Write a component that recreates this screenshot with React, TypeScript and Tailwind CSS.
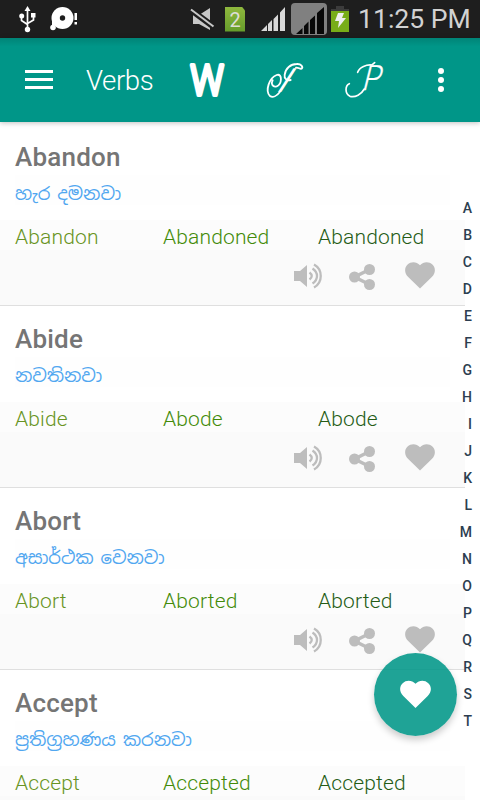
import type { ReactNode } from "react";

type Verb = {
  base: string;
  meaning: string;
  past: string;
  participle: string;
};

const verbs: Verb[] = [
  { base: "Abandon", meaning: "හැර දමනවා", past: "Abandoned", participle: "Abandoned" },
  { base: "Abide", meaning: "නවතිනවා", past: "Abode", participle: "Abode" },
  { base: "Abort", meaning: "අසාර්ථක වෙනවා", past: "Aborted", participle: "Aborted" },
  { base: "Accept", meaning: "ප්‍රතිග්‍රහණය කරනවා", past: "Accepted", participle: "Accepted" },
];

const letters = "ABCDEFGHIJKLMNOPQRST".split("");

const HEART = "M15 26.5 3.2 15C-1 10.5-.6 5.600 2.600 2.600 6-.8 11.500-.6 15 3.200 18.500-.6 24-.8 27.400 2.600 30.600 5.600 31 10.500 26.800 15Z";

function StatusBar() {
  return (
    <header className="flex h-[38px] shrink-0 items-center bg-[#1e1e1e] text-[#d2d2d2]">
      <svg className="ml-[18px] shrink-0" width="19" height="28" viewBox="0 0 19 28" fill="none" stroke="#fff" strokeWidth="1.7">
        <path d="M9.500 4v20M3.500 12v3.500l6 4M15.500 10v5l-6 3.500" />
        <path d="m9.500 1 3 5h-6z" fill="#fff" stroke="none" />
        <circle cx="3.700" cy="11" r="2.500" fill="#fff" stroke="none" />
        <path d="M13 8h4.500v4.500H13z" fill="#fff" stroke="none" />
        <circle cx="9.500" cy="24.500" r="2.700" fill="#fff" stroke="none" />
      </svg>
      <svg className="ml-[12px] shrink-0" width="29" height="26" viewBox="0 0 29 26" fill="#fff">
        <circle cx="13.500" cy="12" r="11" />
        <circle cx="13.500" cy="12" r="2.700" fill="#1e1e1e" />
        <path d="m3 12 3 7-3 3z" />
        <circle cx="4" cy="21.500" r="2.800" />
        <path d="M25.500 7H28v7h-2.500zM25.500 16H28v2.500h-2.500z" />
      </svg>
      <svg className="ml-[112px] shrink-0" width="26" height="26" viewBox="0 0 26 26">
        <path d="M3 9h6L20 2v22L9 18H3z" fill="#c8c8c8" />
        <path d="M1 4 24 21" stroke="#1e1e1e" strokeWidth="6" />
        <path d="M1 3.500 23.500 20.500" stroke="#c8c8c8" strokeWidth="2" />
      </svg>
      <div className="ml-[9px] flex h-[25px] w-5 shrink-0 items-center justify-center bg-gradient-to-b from-[#8fb83e] to-[#659c2b] pt-0.5 text-[20px] leading-none text-[#deded5] [clip-path:polygon(0_0,84%_0,100%_16%,100%_100%,0_100%)]">
        2
      </div>
      <svg className="ml-[16px] shrink-0" width="24" height="24" viewBox="0 0 24 24" fill="#d8d8d8">
        <path d="M0 24 6 18v6zM7 17l4-4v11H7zM12.500 12 17 7.500V24h-4.500zM19 5.500 24 0v24h-5z" />
      </svg>
      <div className="ml-1.5 flex h-8 w-9 shrink-0 items-center justify-center rounded-[4px] bg-[#808080]">
        <svg className="mt-0.5 ml-0.5" width="28" height="27" viewBox="0 0 28 27" fill="#080808">
          <path d="m0 27 6.500-6v6zM8 19l4.500-4.500V27H8zM14 13l5-4.500V27h-5zM21 6l7-6v27h-7z" />
        </svg>
      </div>
      <svg className="ml-1 shrink-0" width="18" height="26" viewBox="0 0 18 26">
        <path d="M5 0h8v3h5v3H0V3h5z" fill="#3c3c3c" />
        <path d="M0 5h18v21H0z" fill="#78ad18" />
        <path d="M7 7h6l-2 5h4L7 22l1-7H4z" fill="#eee" />
      </svg>
      <span className="ml-[9px] whitespace-nowrap text-[26.600px] leading-[38px]">11:25 PM</span>
    </header>
  );
}

function ToolbarButton({ label, children }: { label: string; children: ReactNode }) {
  return (
    <button aria-label={label} className="h-12 w-10 shrink-0 text-white">
      {children}
    </button>
  );
}

function Toolbar() {
  return (
    <nav className="relative z-10 flex h-[84px] shrink-0 items-center bg-[#009688] bg-gradient-to-b from-[#008477] to-[#009688] to-10% text-white shadow-[0_1px_5px_rgba(0,0,0,0.25)]">
      <button aria-label="Menu" className="mb-0.5 ml-[25px] flex w-7 shrink-0 flex-col gap-[5px]">
        <span className="h-[3px] bg-white" />
        <span className="h-[3px] bg-white" />
        <span className="h-[3px] bg-white" />
      </button>
      <h1 className="mt-0.5 ml-[33px] w-[100px] shrink-0 text-[27.600px] leading-none font-light tracking-[-0.4px]">Verbs</h1>
      <ToolbarButton label="Words">
        <svg className="overflow-visible" width="40" height="48" viewBox="0 0 40 48" fill="currentColor">
          <text x="4.200" y="39" fontSize="43" fontWeight="300" textLength="33.500" lengthAdjust="spacingAndGlyphs" stroke="currentColor" strokeWidth="4" strokeLinejoin="round">
            W
          </text>
        </svg>
      </ToolbarButton>
      <div className="ml-[38px] flex">
        <ToolbarButton label="Idioms">
          <svg className="overflow-visible" width="40" height="48" viewBox="12 3 120 144" fill="none" stroke="currentColor" strokeWidth="5.500" strokeLinecap="round">
            <text transform="translate(45 112) skewX(-33)" fontSize="100" fontWeight="400" fill="currentColor" stroke="none">
              I
            </text>
            <path d="M60 110C50 124 38 128 30 123 14 108 28 68 50 60 68 54 66 88 50 94 38 98 32 86 38 76" />
            <path d="M92 75C80 78 72 70 74 60 76 40 92 27 110 27 124 26 130 36 125 41 119 43 116 37 108 38" />
          </svg>
        </ToolbarButton>
      </div>
      <div className="ml-[38px] flex">
        <ToolbarButton label="Phrases">
          <svg className="overflow-visible" width="40" height="48" viewBox="6 3 120 144" fill="none" stroke="currentColor" strokeWidth="5" strokeLinecap="round">
            <text transform="translate(64 104) skewX(-14)" fontSize="105" fontWeight="300" textLength="54" lengthAdjust="spacingAndGlyphs" fill="currentColor" stroke="currentColor" strokeWidth="1">
              P
            </text>
            <path d="M73 102C64 118 46 128 30 124 14 116 15 92 28 86" />
            <path d="M53 52C58 36 80 28 96 30L104 23" />
          </svg>
        </ToolbarButton>
      </div>
      <button aria-label="More options" className="ml-[56px] flex shrink-0 flex-col gap-[3px]">
        <span className="size-1.5 rounded-full bg-white" />
        <span className="size-1.5 rounded-full bg-white" />
        <span className="size-1.5 rounded-full bg-white" />
      </button>
    </nav>
  );
}

function VerbRow({ verb }: { verb: Verb }) {
  return (
    <li className="flex h-[182px] w-[465px] shrink-0 flex-col border-b border-[#dfdfdf]">
      <h2 className="mt-[15px] h-9 pl-[15px] text-[26px] leading-9 font-medium tracking-[0.2px] text-[#757575]">{verb.base}</h2>
      <p className="ml-[15px] h-[30px] w-[435px] bg-[#fefefe] font-['Noto_Sans_Sinhala','Noto_Sans',sans-serif] text-[18px] leading-[38px] [word-spacing:-2px] text-[#51a7f0]">
        {verb.meaning}
      </p>
      <div className="mt-[15px] flex h-[30px] bg-[#fcfcfc] pl-[15px] text-[21px] leading-[34px] font-light tracking-[0.150px]">
        <span className="w-[148px] text-[#689423]">{verb.base}</span>
        <span className="w-[155px] text-[#438b09]">{verb.past}</span>
        <span className="text-[#255c16]">{verb.participle}</span>
      </div>
      <div className="flex flex-1 items-start bg-[#fafafa] pl-[294px] text-[#bdbdbd]">
        <svg className="mt-[13px]" width="29" height="26" viewBox="0 0 29 26" fill="none" stroke="currentColor" strokeWidth="2.300">
          <path d="M0 8h6l7-6v22l-7-6H0z" fill="currentColor" stroke="none" />
          <path d="M15.500 9.500q4.500 3.500 0 7M18.500 5.500c6 4 6 11 0 15M20 1.500c9 5 9 18 0 23" />
        </svg>
        <svg className="ml-[26px] mt-[14px]" width="26" height="26" viewBox="0 0 26 26" fill="currentColor">
          <path d="M20.500 5.500 5.500 13l15 7.500" fill="none" stroke="currentColor" strokeWidth="3.500" />
          <circle cx="5.500" cy="13" r="5.500" />
          <circle cx="20.500" cy="5.500" r="5.500" />
          <circle cx="20.500" cy="20.500" r="5.500" />
        </svg>
        <svg className="ml-[30px] mt-3" width="30" height="27" viewBox="0 0 30 27" fill="currentColor">
          <path d={HEART} />
        </svg>
      </div>
    </li>
  );
}

export default function App() {
  return (
    <div className="relative flex h-[800px] w-[480px] flex-col overflow-hidden bg-white font-['Roboto',sans-serif]">
      <StatusBar />
      <Toolbar />
      <main className="flex min-h-0 flex-1 overflow-hidden pt-0.5">
        <ul className="w-[465px] shrink-0">
          {verbs.map(verb => (
            <VerbRow key={verb.base} verb={verb} />
          ))}
        </ul>
      </main>

      {/* alphabet fast scroller */}
      <div className="absolute top-[195px] right-[8px] flex flex-col items-end text-[14px] leading-[27px] font-medium text-[#2c3e50]">
        {letters.map(letter => (
          <span key={letter}>{letter}</span>
        ))}
      </div>

      <button
        aria-label="Favourites"
        className="absolute top-[653px] left-[374px] flex size-[83px] items-center justify-center rounded-full bg-[#009688]/88 text-white shadow-[0_4px_7px_rgba(0,0,0,0.2)]"
      >
        <svg width="31" height="29" viewBox="0 0 30 27" fill="currentColor">
          <path d={HEART} />
        </svg>
      </button>
    </div>
  );
}
